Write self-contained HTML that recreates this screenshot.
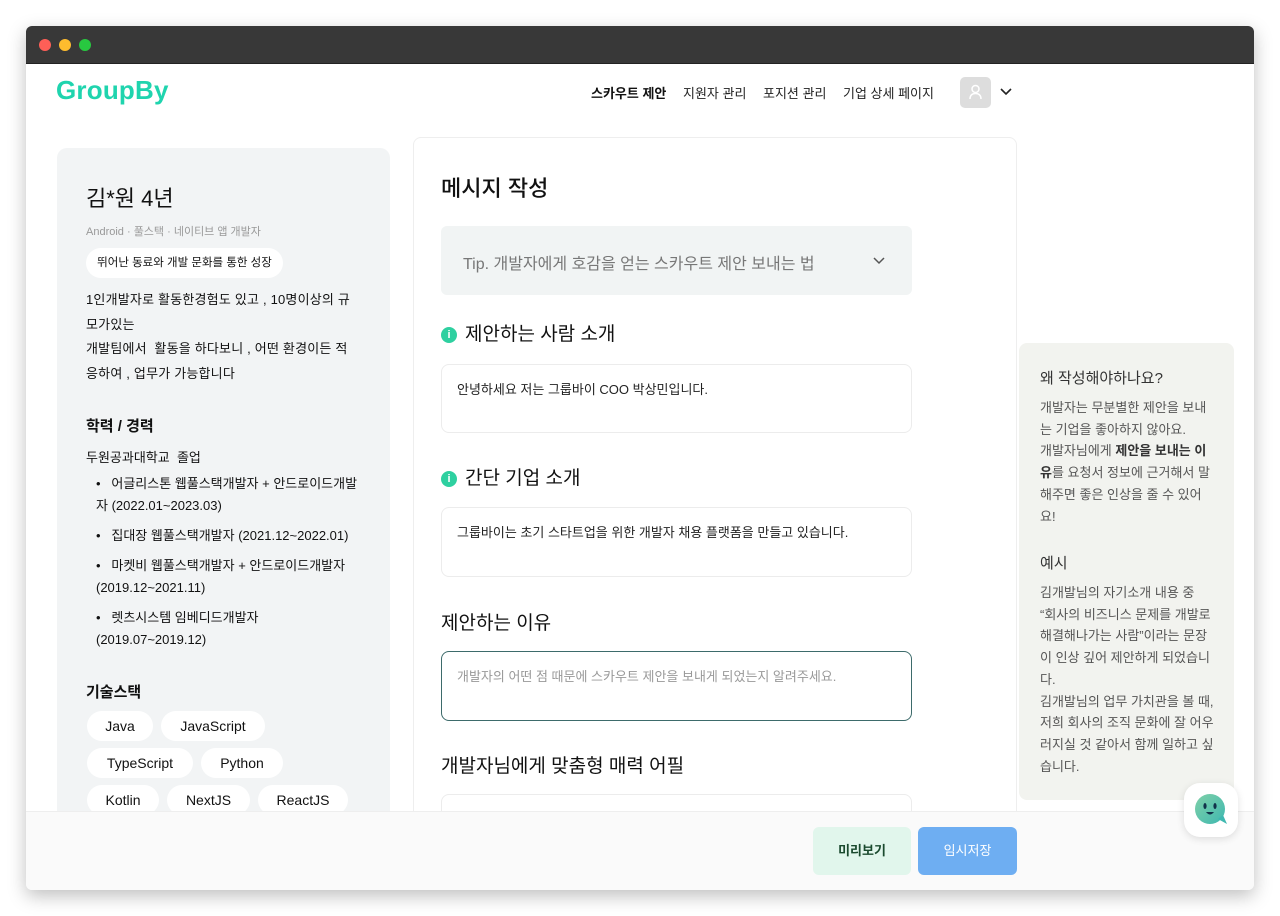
<!DOCTYPE html>
<html><head><meta charset="utf-8"><style>
*{margin:0;padding:0;box-sizing:border-box}
body{width:1280px;height:916px;background:#fff;font-family:"Liberation Sans","Noto Sans CJK KR",sans-serif;color:#111;position:relative;overflow:hidden}
.a{position:absolute;white-space:nowrap}
#win{position:absolute;left:26px;top:26px;width:1228px;height:864px;background:#fff;border-radius:6px;overflow:hidden;box-shadow:0 6px 18px rgba(0,0,0,.25)}
.tb{position:absolute;left:0;top:0;width:100%;height:38px;background:#383838;border-bottom:1px solid #222}
.dot{position:absolute;top:13px;width:12px;height:12px;border-radius:50%}
.pill{position:absolute;background:#fff;border-radius:16px;height:30px;font-size:14px;line-height:30px;text-align:center;color:#111}
.box{position:absolute;border:1px solid #ececec;border-radius:8px;background:#fff;font-size:13px;color:#222;padding:14px 15px}
.h{font-size:19px;color:#111}
.ic{display:inline-block;width:16px;height:16px;border-radius:50%;background:#2ed0a0;color:#fff;font-size:11px;line-height:16px;text-align:center;font-weight:bold;vertical-align:2px;margin-right:8px}
</style></head><body>
<div id="win">
<div class="tb"><div class="dot" style="left:13px;background:#fe5f57"></div><div class="dot" style="left:33px;background:#febc2e"></div><div class="dot" style="left:53px;background:#28c840"></div></div>
<div class="a" style="left:30px;top:49px;font-size:26px;color:#1fd4ae;font-weight:bold;letter-spacing:0.2px">GroupBy</div>
<div class="a" style="left:565px;top:57px;font-size:13px;font-weight:bold">스카우트 제안</div>
<div class="a" style="left:657px;top:57px;font-size:13px;color:#222">지원자 관리</div>
<div class="a" style="left:737px;top:57px;font-size:13px;color:#222">포지션 관리</div>
<div class="a" style="left:817px;top:57px;font-size:13px;color:#222">기업 상세 페이지</div>
<div class="a" style="left:934px;top:51px;width:31px;height:31px;border-radius:5px;background:#ddd"><svg width="31" height="31"><circle cx="15.5" cy="12" r="3.5" fill="none" stroke="#fff" stroke-width="1.5"/><path d="M10 22c0-4 2.5-5.5 5.5-5.5S21 18 21 22" fill="none" stroke="#fff" stroke-width="1.5"/></svg></div>
<svg class="a" style="left:973px;top:60px" width="14" height="12"><path d="M2 3l5 5 5-5" fill="none" stroke="#222" stroke-width="1.6"/></svg>

<div class="a" style="left:31px;top:122px;width:333px;height:680px;background:#f2f4f5;border-radius:10px"></div>
<div class="a" style="left:60px;top:155px;font-size:22px">김*원 4년</div>
<div class="a" style="left:60px;top:197px;font-size:11px;color:#999">Android · 풀스택 · 네이티브 앱 개발자</div>
<div class="pill" style="left:60px;top:222px;width:197px;font-size:11.5px">뛰어난 동료와 개발 문화를 통한 성장</div>
<div class="a" style="left:60px;top:262px;font-size:13px;line-height:24.5px;color:#111;white-space:normal;width:272px;letter-spacing:0.2px">1인개발자로 활동한경험도 있고 , 10명이상의 규모가있는<br>개발팀에서 &nbsp;활동을 하다보니 , 어떤 환경이든 적응하여 , 업무가 가능합니다</div>
<div class="a" style="left:60px;top:389px;font-size:15px;font-weight:bold">학력 / 경력</div>
<div class="a" style="left:60px;top:421px;font-size:13px">두원공과대학교 &nbsp;졸업</div>
<div class="a" style="left:70px;top:447px;font-size:13px;line-height:22px;white-space:normal;width:270px">
<div style="margin-bottom:8px">•&nbsp;&nbsp; 어글리스톤 웹풀스택개발자 + 안드로이드개발자 (2022.01~2023.03)</div>
<div style="margin-bottom:8px">•&nbsp;&nbsp; 집대장 웹풀스택개발자 (2021.12~2022.01)</div>
<div style="margin-bottom:8px">•&nbsp;&nbsp; 마켓비 웹풀스택개발자 + 안드로이드개발자 (2019.12~2021.11)</div>
<div>•&nbsp;&nbsp; 렛츠시스템 임베디드개발자 (2019.07~2019.12)</div></div>
<div class="a" style="left:60px;top:655px;font-size:15px;font-weight:bold">기술스택</div>
<div class="pill" style="left:61px;top:685px;width:66px">Java</div>
<div class="pill" style="left:135px;top:685px;width:104px">JavaScript</div>
<div class="pill" style="left:61px;top:722px;width:106px">TypeScript</div>
<div class="pill" style="left:175px;top:722px;width:82px">Python</div>
<div class="pill" style="left:61px;top:759px;width:72px">Kotlin</div>
<div class="pill" style="left:141px;top:759px;width:83px">NextJS</div>
<div class="pill" style="left:232px;top:759px;width:90px">ReactJS</div>

<div class="a" style="left:387px;top:111px;width:604px;height:720px;border:1px solid #eee;border-radius:8px"></div>
<div class="a" style="left:415px;top:145px;font-size:22px;font-weight:500">메시지 작성</div>
<div class="a" style="left:415px;top:200px;width:471px;height:69px;background:#f1f4f4;border-radius:6px"></div>
<div class="a" style="left:437px;top:224px;font-size:16px;color:#777">Tip. 개발자에게 호감을 얻는 스카우트 제안 보내는 법</div>
<svg class="a" style="left:846px;top:229px" width="14" height="12"><path d="M2 3l5 5 5-5" fill="none" stroke="#555" stroke-width="1.5"/></svg>
<div class="a h" style="left:415px;top:293px"><span class="ic">i</span>제안하는 사람 소개</div>
<div class="box" style="left:415px;top:338px;width:471px;height:69px">안녕하세요 저는 그룹바이 COO 박상민입니다.</div>
<div class="a h" style="left:415px;top:437px"><span class="ic">i</span>간단 기업 소개</div>
<div class="box" style="left:415px;top:481px;width:471px;height:70px">그룹바이는 초기 스타트업을 위한 개발자 채용 플랫폼을 만들고 있습니다.</div>
<div class="a h" style="left:415px;top:582px">제안하는 이유</div>
<div class="box" style="left:415px;top:625px;width:471px;height:70px;border-color:#3d6b6b;color:#999">개발자의 어떤 점 때문에 스카우트 제안을 보내게 되었는지 알려주세요.</div>
<div class="a h" style="left:415px;top:725px">개발자님에게 맞춤형 매력 어필</div>
<div class="box" style="left:415px;top:768px;width:471px;height:70px"></div>

<div class="a" style="left:993px;top:317px;width:215px;height:457px;background:#f2f3ef;border-radius:8px"></div>
<div class="a" style="left:1014px;top:341px;font-size:15px;color:#333">왜 작성해야하나요?</div>
<div class="a" style="left:1014px;top:371px;font-size:13px;line-height:21.7px;color:#555;white-space:normal;width:175px">개발자는 무분별한 제안을 보내는 기업을 좋아하지 않아요.<br>개발자님에게 <b style="color:#333">제안을 보내는 이유</b>를 요청서 정보에 근거해서 말해주면 좋은 인상을 줄 수 있어요!</div>
<div class="a" style="left:1014px;top:526px;font-size:15px;color:#333">예시</div>
<div class="a" style="left:1014px;top:556px;font-size:13px;line-height:21.7px;color:#555;white-space:normal;width:176px">김개발님의 자기소개 내용 중<br>“회사의 비즈니스 문제를 개발로 해결해나가는 사람”이라는 문장이 인상 깊어 제안하게 되었습니다.<br>김개발님의 업무 가치관을 볼 때, 저희 회사의 조직 문화에 잘 어우러지실 것 같아서 함께 일하고 싶습니다.</div>

<div class="a" style="left:0;top:785px;width:1228px;height:79px;background:#fafafa;border-top:1px solid #eee"></div>
<div class="a" style="left:787px;top:801px;width:98px;height:48px;background:#e1f6ec;border-radius:6px;font-size:13px;font-weight:bold;color:#1a4a2e;text-align:center;line-height:48px">미리보기</div>
<div class="a" style="left:892px;top:801px;width:99px;height:48px;background:#6eaef2;border-radius:6px;font-size:13px;color:#fff;text-align:center;line-height:48px">임시저장</div>
<div class="a" style="left:1158px;top:757px;width:54px;height:54px;background:#fff;border-radius:16px;box-shadow:0 2px 8px rgba(0,0,0,.12)">
<svg width="54" height="54"><defs><linearGradient id="g" x1="0" y1="0" x2="1" y2="1"><stop offset="0" stop-color="#7fd0a8"/><stop offset="1" stop-color="#3fb8b0"/></linearGradient></defs><circle cx="26" cy="26" r="15" fill="url(#g)"/><path d="M34 36l9 5-4-9z" fill="#3fb8b0"/><ellipse cx="21" cy="23" rx="1.6" ry="3" fill="#12324a"/><ellipse cx="31" cy="23" rx="1.6" ry="3" fill="#12324a"/><path d="M22 29q4 5 8 0z" fill="#12324a"/></svg></div>
</div>
</body></html>
